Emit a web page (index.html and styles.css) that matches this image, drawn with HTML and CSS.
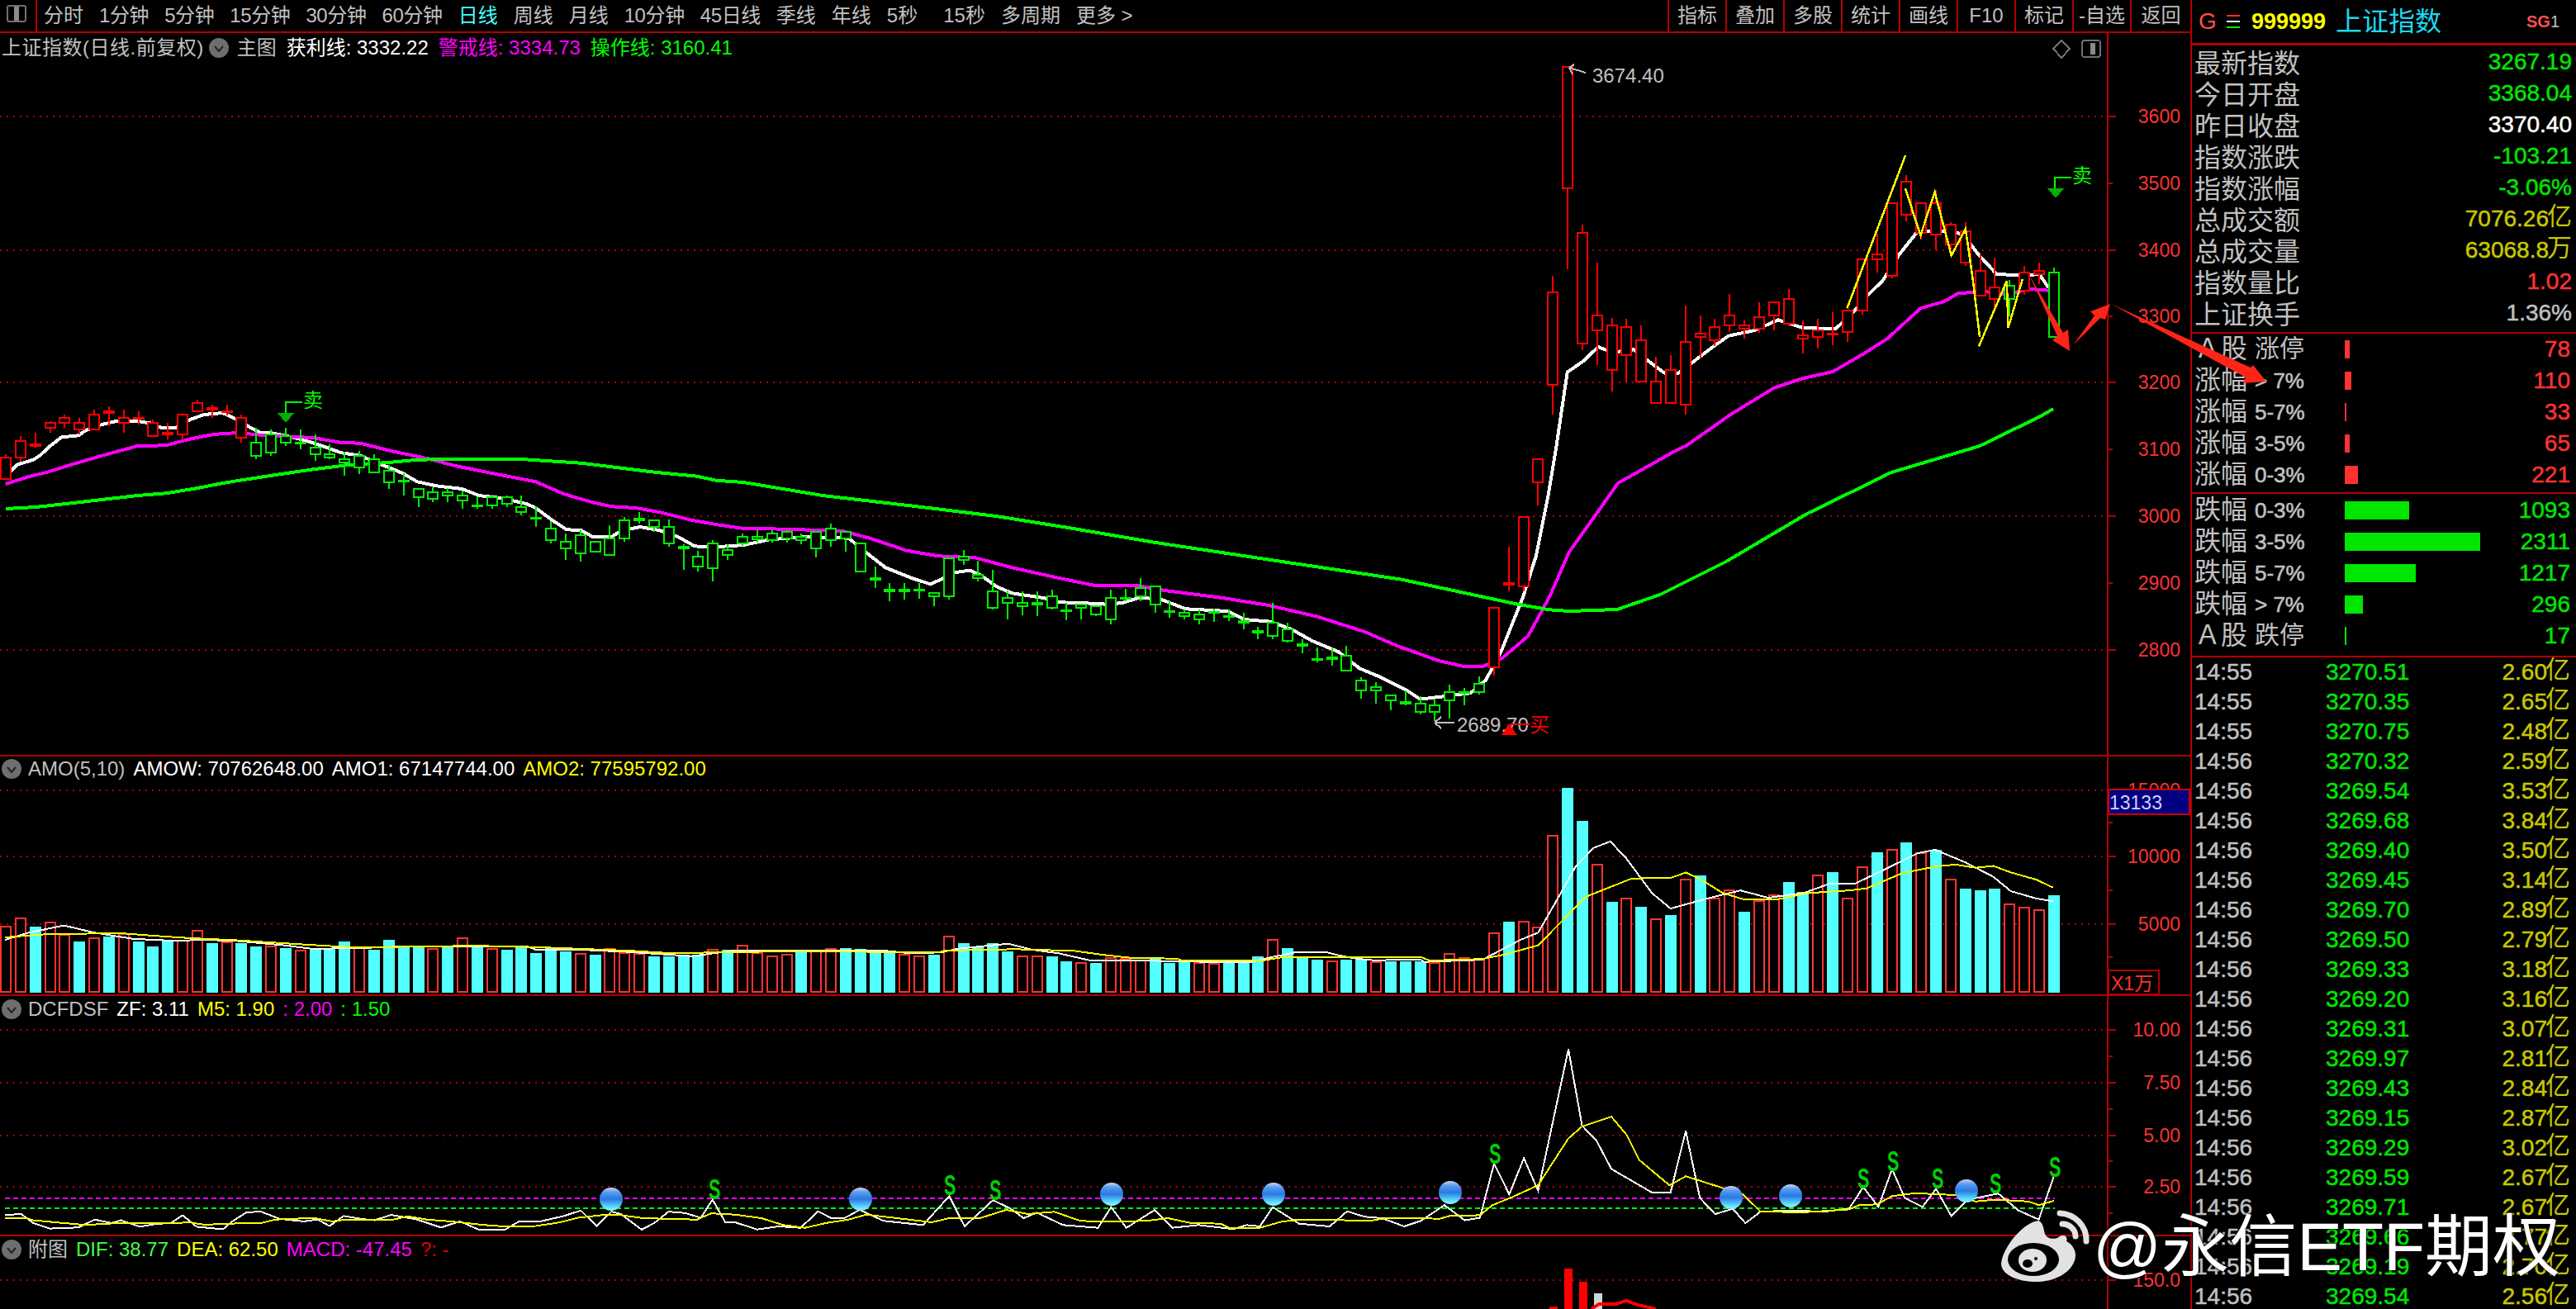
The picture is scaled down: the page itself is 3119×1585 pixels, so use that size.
FILE: index.html
```html
<!DOCTYPE html>
<html lang="zh-CN">
<head>
<meta charset="utf-8">
<title>上证指数 999999</title>
<link rel="stylesheet" href="styles.css">
</head>
<body>
<div class="app">
  <main class="main">
    <nav class="toolbar">
      <div class="tb-icon"><i class="win"></i></div>
      <div class="periods">
        <span>分时</span><span class="d">1分钟</span><span class="d">5分钟</span><span class="d">15分钟</span><span class="d">30分钟</span><span class="d">60分钟</span><span class="on">日线</span><span>周线</span><span>月线</span><span class="d">10分钟</span><span class="d">45日线</span><span>季线</span><span>年线</span><span>5秒</span><span class="wide">15秒</span><span>多周期</span><span>更多 &gt;</span>
      </div>
      <div class="tools">
        <span>指标</span><span>叠加</span><span>多股</span><span>统计</span><span>画线</span><span>F10</span><span>标记</span><span>-自选</span><span class="last">返回</span>
      </div>
    </nav>

    <section class="pane pane-main">
      <svg id="chart-main" class="plot" viewBox="0 40 2652 874" width="2652" height="874"></svg>
      <div class="head head-main">
        <span class="grey title-sp">上证指数(日线.前复权)</span>
        <svg class="chev" viewBox="0 0 24 24"><ellipse cx="12" cy="12" rx="12" ry="12" fill="#6e6e6e"/><path d="M7 10l5 6 5-6" fill="none" stroke="#222" stroke-width="2"/></svg>
        <span class="grey">主图</span>
        <span class="white">获利线: 3332.22</span>
        <span class="magenta">警戒线: 3334.73</span>
        <span class="green">操作线: 3160.41</span>
      </div>
    </section>

    <section class="pane pane-amo">
      <svg id="chart-amo" class="plot" viewBox="0 916 2652 288" width="2652" height="288"></svg>
      <div class="head head-sub">
        <svg class="chev" viewBox="0 0 24 24"><ellipse cx="12" cy="12" rx="12" ry="12" fill="#6e6e6e"/><path d="M7 10l5 6 5-6" fill="none" stroke="#222" stroke-width="2"/></svg>
        <span class="grey">AMO(5,10)</span>
        <span class="white">AMOW: 70762648.00</span>
        <span class="white">AMO1: 67147744.00</span>
        <span class="yellow">AMO2: 77595792.00</span>
      </div>
    </section>

    <section class="pane pane-dcf">
      <svg id="chart-dcf" class="plot" viewBox="0 1206 2652 289" width="2652" height="289"></svg>
      <div class="head head-sub">
        <svg class="chev" viewBox="0 0 24 24"><ellipse cx="12" cy="12" rx="12" ry="12" fill="#6e6e6e"/><path d="M7 10l5 6 5-6" fill="none" stroke="#222" stroke-width="2"/></svg>
        <span class="grey">DCFDSF</span>
        <span class="white">ZF: 3.11</span>
        <span class="yellow">M5: 1.90</span>
        <span class="magenta">: 2.00</span>
        <span class="green">: 1.50</span>
      </div>
    </section>

    <section class="pane pane-macd">
      <svg id="chart-macd" class="plot" viewBox="0 1497 2652 88" width="2652" height="88"></svg>
      <div class="head head-sub">
        <svg class="chev" viewBox="0 0 24 24"><ellipse cx="12" cy="12" rx="12" ry="12" fill="#6e6e6e"/><path d="M7 10l5 6 5-6" fill="none" stroke="#222" stroke-width="2"/></svg>
        <span class="grey">附图</span>
        <span class="lime">DIF: 38.77</span>
        <span class="yellow">DEA: 62.50</span>
        <span class="magenta">MACD: -47.45</span>
        <span class="red">?: -</span>
      </div>
    </section>
  </main>

  <aside class="side">
    <header class="side-title">
      <span class="g">G</span>
      <span class="menu"><i class="m-r"></i><i class="m-w"></i><i class="m-g"></i></span>
      <span class="code">999999</span>
      <span class="name">上证指数</span>
      <span class="sg">SG<b>1</b></span>
    </header>

    <div class="quote">
      <div class="q-row"><span>最新指数</span><b class="v-green">3267.19</b></div>
      <div class="q-row"><span>今日开盘</span><b class="v-green">3368.04</b></div>
      <div class="q-row"><span>昨日收盘</span><b class="v-white">3370.40</b></div>
      <div class="q-row"><span>指数涨跌</span><b class="v-green">-103.21</b></div>
      <div class="q-row"><span>指数涨幅</span><b class="v-green">-3.06%</b></div>
      <div class="q-row"><span>总成交额</span><b class="v-olive">7076.26<em>亿</em></b></div>
      <div class="q-row"><span>总成交量</span><b class="v-olive">63068.8<em>万</em></b></div>
      <div class="q-row"><span>指数量比</span><b class="v-red">1.02</b></div>
      <div class="q-row"><span>上证换手</span><b class="v-grey">1.36%</b></div>
    </div>

    <div class="breadth">
      <div class="b-row"><span class="b-a">Ａ股</span><span class="b-cj">涨停</span><i class="bar bar-r w78"></i><b class="v-red">78</b></div>
      <div class="b-row"><span class="b-a">涨幅</span><span class="b-n">&gt; 7%</span><i class="bar bar-r w110"></i><b class="v-red">110</b></div>
      <div class="b-row"><span class="b-a">涨幅</span><span class="b-n">5-7%</span><i class="bar bar-r w33"></i><b class="v-red">33</b></div>
      <div class="b-row"><span class="b-a">涨幅</span><span class="b-n">3-5%</span><i class="bar bar-r w65"></i><b class="v-red">65</b></div>
      <div class="b-row"><span class="b-a">涨幅</span><span class="b-n">0-3%</span><i class="bar bar-r w221"></i><b class="v-red">221</b></div>
    </div>

    <div class="breadth breadth-down">
      <div class="b-row"><span class="b-a">跌幅</span><span class="b-n">0-3%</span><i class="bar bar-g w1093"></i><b class="v-green">1093</b></div>
      <div class="b-row"><span class="b-a">跌幅</span><span class="b-n">3-5%</span><i class="bar bar-g w2311"></i><b class="v-green">2311</b></div>
      <div class="b-row"><span class="b-a">跌幅</span><span class="b-n">5-7%</span><i class="bar bar-g w1217"></i><b class="v-green">1217</b></div>
      <div class="b-row"><span class="b-a">跌幅</span><span class="b-n">&gt; 7%</span><i class="bar bar-g w296"></i><b class="v-green">296</b></div>
      <div class="b-row"><span class="b-a">Ａ股</span><span class="b-cj">跌停</span><i class="bar bar-g w17"></i><b class="v-green">17</b></div>
    </div>

    <div class="tape">
      <div class="t-row"><span>14:55</span><b>3270.51</b><u>2.60<em>亿</em></u></div>
      <div class="t-row"><span>14:55</span><b>3270.35</b><u>2.65<em>亿</em></u></div>
      <div class="t-row"><span>14:55</span><b>3270.75</b><u>2.48<em>亿</em></u></div>
      <div class="t-row"><span>14:56</span><b>3270.32</b><u>2.59<em>亿</em></u></div>
      <div class="t-row"><span>14:56</span><b>3269.54</b><u>3.53<em>亿</em></u></div>
      <div class="t-row"><span>14:56</span><b>3269.68</b><u>3.84<em>亿</em></u></div>
      <div class="t-row"><span>14:56</span><b>3269.40</b><u>3.50<em>亿</em></u></div>
      <div class="t-row"><span>14:56</span><b>3269.45</b><u>3.14<em>亿</em></u></div>
      <div class="t-row"><span>14:56</span><b>3269.70</b><u>2.89<em>亿</em></u></div>
      <div class="t-row"><span>14:56</span><b>3269.50</b><u>2.79<em>亿</em></u></div>
      <div class="t-row"><span>14:56</span><b>3269.33</b><u>3.18<em>亿</em></u></div>
      <div class="t-row"><span>14:56</span><b>3269.20</b><u>3.16<em>亿</em></u></div>
      <div class="t-row"><span>14:56</span><b>3269.31</b><u>3.07<em>亿</em></u></div>
      <div class="t-row"><span>14:56</span><b>3269.97</b><u>2.81<em>亿</em></u></div>
      <div class="t-row"><span>14:56</span><b>3269.43</b><u>2.84<em>亿</em></u></div>
      <div class="t-row"><span>14:56</span><b>3269.15</b><u>2.87<em>亿</em></u></div>
      <div class="t-row"><span>14:56</span><b>3269.29</b><u>3.02<em>亿</em></u></div>
      <div class="t-row"><span>14:56</span><b>3269.59</b><u>2.67<em>亿</em></u></div>
      <div class="t-row"><span>14:56</span><b>3269.71</b><u>2.67<em>亿</em></u></div>
      <div class="t-row"><span>14:56</span><b>3269.66</b><u>2.77<em>亿</em></u></div>
      <div class="t-row"><span>14:56</span><b>3269.19</b><u>2.70<em>亿</em></u></div>
      <div class="t-row"><span>14:56</span><b>3269.54</b><u>2.56<em>亿</em></u></div>
    </div>
  </aside>
</div>

<svg class="overlay" viewBox="0 0 3119 1585" width="3119" height="1585">
  <g class="arrows">
    <polygon points="2457,333 2498,403 2504,399 2506,425 2485,412 2491,407"/>
    <polygon points="2510,418 2536,382 2531,377 2555,368 2549,387 2543,385"/>
    <polygon points="2556,368 2725,445 2728,442 2744,462 2716,464 2719,457"/>
  </g>
  <g class="weibo">
    <path class="wb-body" d="M2468 1478C2450 1480 2425 1510 2423 1530C2423 1546 2450 1553 2468 1552C2495 1551 2513 1535 2513 1520C2513 1512 2508 1506 2502 1503C2504 1498 2500 1494 2494 1497C2488 1502 2478 1500 2476 1494C2474 1488 2474 1480 2468 1478Z"/>
    <ellipse class="wb-ring" cx="2462" cy="1525" rx="31" ry="20"/>
    <ellipse class="wb-in" cx="2461" cy="1526" rx="17" ry="14"/>
    <ellipse class="wb-eye" cx="2455" cy="1530" rx="6" ry="5"/>
    <circle class="wb-eye" cx="2465" cy="1524" r="2"/>
    <path class="wb-wave" d="M2494 1469C2512 1470 2527 1484 2526 1503"/>
    <path class="wb-wave" d="M2497 1482C2506 1482 2513 1489 2513 1497"/>
  </g>
</svg>
<div class="watermark">@永信ETF期权</div>

<script src="chart.js"></script>
</body>
</html>
```

FILE: styles.css
```css
* { box-sizing: border-box; }
html, body { margin: 0; padding: 0; background: #000; overflow: hidden; }
body {
  width: 3119px;
  height: 1585px;
  position: relative;
  color: #c0c0c0;
  font-family: "Liberation Sans", "Noto Sans CJK SC", sans-serif;
}
.app { display: flex; width: 3119px; height: 1585px; }
.main { width: 2652px; flex: none; display: flex; flex-direction: column; }

/* toolbar */
.toolbar {
  height: 40px;
  flex: none;
  display: flex;
  border-bottom: 2px solid #b00000;
  font-size: 24px;
  line-height: 38px;
  white-space: nowrap;
}
.tb-icon { width: 45px; flex: none; border-right: 2px solid #b00000; padding: 6px 0 0 8px; }
.win { display: block; width: 24px; height: 21px; border: 2px solid #707070; border-radius: 3px; background: linear-gradient(90deg, #000 0 7px, #8a8a8a 7px 13px, #000 13px); }
.periods { display: flex; gap: 19px; padding-left: 8px; }
.periods .on { color: #4ff; }
.periods .d { letter-spacing: -.4px; }
.periods .wide { margin-left: 12px; }
.tools { margin-left: auto; display: flex; }
.tools span { width: 70px; text-align: center; border-left: 2px solid #b00000; }
.tools .last { width: 73px; }

/* chart panes */
.pane { position: relative; flex: none; border-bottom: 2px solid #b00000; }
.pane-main { height: 876px; }
.pane-amo { height: 290px; }
.pane-dcf { height: 291px; }
.pane-macd { height: 88px; border-bottom: 0; }
.plot { display: block; }
.head {
  position: absolute;
  left: 2px;
  display: flex;
  align-items: center;
  gap: 12px;
  height: 24px;
  font-size: 24px;
  line-height: 24px;
  white-space: nowrap;
}
.head-main { top: 6px; }
.head-sub { top: 3px; left: 2px; gap: 10px; }
.pane-dcf .head, .pane-macd .head { top: 4px; }
.title-sp { letter-spacing: .5px; margin-right: -6px; }
.chev { width: 24px; height: 24px; flex: none; margin-right: -2px; }
.grey { color: #c0c0c0; }
.white { color: #fff; }
.magenta { color: #f0f; }
.green { color: #0f0; }
.lime { color: #4f4; }
.yellow { color: #ff0; }
.red { color: #e00000; }

/* svg chart parts */
.grid { stroke: #b00000; stroke-width: 2; stroke-dasharray: 2 6; fill: none; }
.axis { stroke: #b00000; stroke-width: 2; fill: none; }
.lbl { fill: #ff3232; font-size: 23px; text-anchor: end; }
.ma { fill: none; stroke-linejoin: round; }
.ma-w { stroke: #fff; stroke-width: 4; }
.ma-m { stroke: #f0f; stroke-width: 4; }
.ma-g { stroke: #0f0; stroke-width: 4; }
.zig { fill: none; stroke: #ff0; stroke-width: 2.5; }
.cu { stroke: #f00; stroke-width: 2; fill: #000; }
.cd { stroke: #0e0; stroke-width: 2; fill: #000; }
.vr { stroke: #ff3232; stroke-width: 2; fill: #000; }
.vc { fill: #54ffff; }
.thin-w { fill: none; stroke: #fff; stroke-width: 2; }
.thin-y { fill: none; stroke: #ff0; stroke-width: 2; }
.dash-m { stroke: #f0f; stroke-width: 2; stroke-dasharray: 6 4; }
.dash-g { stroke: #0f0; stroke-width: 2; stroke-dasharray: 6 4; }
.note { fill: #c0c0c0; font-size: 24px; }
.tag-s { fill: #00d000; font-size: 36px; font-weight: 700; }
.tag-sell { fill: #0f0; font-size: 24px; }
.tag-buy { fill: #f00; font-size: 24px; }
.ln-g { stroke: #0f0; stroke-width: 2; fill: none; }
.ln-r { stroke: #f00; stroke-width: 2; fill: none; }
.ln-n { stroke: #c0c0c0; stroke-width: 2; fill: none; }
.tri-g { fill: #00b000; }
.tri-r { fill: #f00; }
.win-s { fill: #000; stroke: #707070; stroke-width: 2; }
.win-b { fill: #8a8a8a; }
.dia { fill: none; stroke: #707070; stroke-width: 2; }
.box-blue { fill: #000080; stroke: #d00000; stroke-width: 2; }
.box-none { fill: #000; stroke: #b00000; stroke-width: 2; }
.box-txt { fill: #d0d0ff; font-size: 23px; }
.box-x { fill: #ff3232; font-size: 23px; }
.mb-r { fill: #f00; }
.mb-g { fill: #c8d8d8; }
.ln-mr { stroke: #f00; stroke-width: 4; fill: none; }

/* side panel */
.side { width: 467px; flex: none; border-left: 2px solid #b00000; display: flex; flex-direction: column; }
.side-title { height: 55px; flex: none; display: flex; align-items: center; border-bottom: 3px solid #b00000; padding-left: 8px; position: relative; }
.g { color: #ff5050; font-size: 28px; width: 34px; }
.menu { width: 30px; display: flex; flex-direction: column; gap: 5px; }
.menu i { display: block; width: 16px; height: 2px; }
.m-r { background: #ff3030; }
.m-w { background: #fff; }
.m-g { background: #0e0; }
.code { color: #ff0; font-size: 27px; font-weight: 700; width: 102px; }
.name { color: #1cd8f0; font-size: 32px; line-height: 38px; }
.sg { margin-left: auto; margin-right: 20px; color: #ff5050; font-size: 20px; font-weight: 700; }
.sg b { color: #c0c0c0; font-weight: 400; }

.quote { flex: none; height: 349px; padding-top: 3px; border-bottom: 2px solid #b00000; }
.q-row { display: flex; justify-content: space-between; align-items: center; height: 38px; padding: 0 5px 0 3px; font-size: 32px; line-height: 38px; white-space: nowrap; }
.q-row b, .b-row b, .t-row b, .t-row u, .t-row span { -webkit-text-stroke: .5px currentColor; }
.q-row b, .b-row b { font-size: 28px; font-weight: 400; line-height: 38px; }
.q-row b { display: flex; align-items: center; margin-top: -4px; }
.q-row em, .t-row em { font-style: normal; font-size: 30px; line-height: 30px; margin: -6px 0 0 -2px; -webkit-text-stroke: 0; }
.v-green { color: #00e600; }
.v-white { color: #fff; }
.v-olive { color: #c8c800; }
.v-red { color: #ff3232; }
.v-grey { color: #c0c0c0; }

.breadth { flex: none; height: 194px; padding: 0 7px 0 3px; border-bottom: 2px solid #b00000; }
.breadth-down { height: 198px; padding-top: 1px; }
.b-row { display: flex; align-items: center; height: 38px; white-space: nowrap; }
.b-a { width: 73px; flex: none; font-size: 32px; line-height: 32px; margin-top: -3px; }
.b-cj { width: 109px; flex: none; font-size: 30px; line-height: 32px; margin-top: -3px; }
.b-n { width: 109px; flex: none; font-size: 26px; -webkit-text-stroke: .6px currentColor; }
.bar { display: block; height: 22px; flex: none; }
.bar-r { background: #ff3232; }
.bar-g { background: #00e600; }
.b-row b { margin-left: auto; }
.w78 { width: 6px; } .w110 { width: 8px; } .w33 { width: 2px; } .w65 { width: 6px; } .w221 { width: 16px; }
.w1093 { width: 78px; } .w2311 { width: 164px; } .w1217 { width: 86px; } .w296 { width: 22px; } .w17 { width: 2px; }

.tape { flex: 1; padding: 0 7px 0 3px; overflow: hidden; }
.t-row { display: flex; align-items: center; height: 36px; font-size: 28px; line-height: 32px; white-space: nowrap; }
.t-row span { width: 159px; flex: none; color: #c0c0c0; }
.t-row b { font-weight: 400; color: #00e600; }
.t-row u { display: flex; align-items: center; margin-left: auto; text-decoration: none; color: #c8c800; }

/* overlays */
.overlay { position: absolute; left: 0; top: 0; pointer-events: none; }
.arrows polygon { fill: #ff2418; }
.wb-body { fill: #e2e2e2; }
.wb-ring, .wb-eye { fill: #000; }
.wb-in { fill: #e2e2e2; }
.wb-wave { fill: none; stroke: #e2e2e2; stroke-width: 7; stroke-linecap: round; }
.watermark {
  position: absolute;
  left: 2534px;
  top: 1460px;
  font-size: 82px;
  line-height: 100px;
  color: #fff;
  white-space: nowrap;
  text-shadow: 0 0 3px #000, 0 0 3px #000;
}
```

FILE: chart.js
```javascript
// Daily K-line data, read per bar in page pixels, rendered into the four chart panes.
const X = n => Math.round(7 + 17.84 * n);
const y3 = (base, a) => a.map(v => base + v / 3);

// [bodyTop, bodyBottom, wickTop, wickBottom]
const c0 = [[338,424,330,424],[278,346,265,358],[290,304,252,305],[212,238,210,252],[194,220,186,234],[212,244,198,258],[182,244,168,244],[170,184,156,228],[194,220,168,252],[194,204,174,222],[212,268,204,268],[248,262,216,276],[182,262,182,278],[140,178,132,178],[158,172,150,198],[170,178,150,188],[194,274,186,288],[284,340,234,348],[254,328,240,336],[260,292,234,300],[284,292,240,312],[302,334,258,354],[326,346,294,348],[344,364,320,408],[332,382,318,402],[344,400,330,400],[386,436,370,456],[422,430,400,480],[452,490,452,522],[464,496,450,504],[464,484,452,504],[476,502,462,528],[512,520,484,528],[482,520,476,528],[482,514,480,522],[518,544,480,552],[558,562,520,594],[596,646,574,654],[644,676,618,714],[620,694,606,720],[644,688,644,688],[632,700,588,700],[566,640,558,648],[560,574,540,582],[566,598,566,612],[590,658,566,666],[662,676,656,750],[698,742,680,756],[650,748,642,792],[674,700,656,714],[626,656,618,664]];
const c1 = [[146,162,126,170],[134,166,126,172],[128,160,126,172],[148,164,138,178],[128,196,128,226],[116,166,102,186],[128,160,128,204],[170,280,170,280],[296,310,258,336],[338,352,318,384],[338,352,318,378],[338,346,318,376],[350,370,350,402],[224,370,224,378],[218,238,198,252],[284,304,236,312],[344,412,270,414],[368,394,344,450],[386,406,348,436],[386,400,348,438],[362,412,342,414],[414,418,390,452],[392,412,392,450],[400,436,400,438],[368,454,342,468],[368,374,340,384],[332,370,300,384],[326,400,326,426],[416,424,384,444],[422,442,414,450],[428,452,414,468],[420,424,410,458],[434,442,414,456],[452,466,426,486],[488,500,478,522],[458,514,390,522],[482,532,462,534],[536,550,522,574],[590,598,552,606],[584,598,556,618],[578,640,546,640],[668,712,660,738],[692,712,678,756],[722,748,722,780],[746,760,708,762],[752,790,730,796],[758,790,738,820],[710,748,686,810],[710,720,698,762],[680,718,656,724],[404,628,404,654]];
const c2 = [[938,1282,882,1386],[120,568,120,858],[722,1132,696,1152],[1022,1084,834,1206],[1058,1228,1034,1302],[1064,1174,1038,1270],[1112,1270,1062,1270],[1262,1348,1176,1348],[1220,1348,1170,1348],[1118,1354,990,1386],[1088,1108,1026,1180],[1064,1120,1038,1136],[1022,1066,948,1086],[1058,1078,1044,1110],[1028,1078,978,1090],[974,1030,974,1080],[962,1060,930,1066],[1094,1112,1044,1164],[1076,1106,1038,1146],[1088,1096,1014,1134],[1004,1090,1004,1122],[818,1012,818,1024],[800,826,730,870],[614,886,614,892],[536,664,516,684],[614,730,614,750],[614,736,570,790],[692,772,686,790],[716,838,686,846],[860,958,804,958],[920,970,816,1000],[914,968,896,1030],[866,938,846,952],[860,878,834,912],[866,1108,852,1108]];

const candles = [
  ...c0.map(r => y3(440, r)),
  ...c1.map(r => y3(600, r)),
  [704.7, 709, 662, 716], [624.7, 711, 624.7, 716], [554.7, 585, 554.7, 611.7],
  ...c2.map(r => y3(40, r))
];
const isUp = n => (n <= 16) || (n >= 101 && n !== 136 && n !== 139);

// Amount bars: [topY, 'r' hollow red | 'c' filled cyan]
const t5 = v => 900 + v / 2.289;
const t10 = v => 1090 + v / 3;
const vol = [];
'505r 482r 508c 495r 528r 549c 537r 536c 527r 549c 563c 547c 545r 518r 554c 550r 554c 563c 560r 568c 573r 570c 568c 549c 565r 572c 545c 560c 566c 568r 560c 537r 560c 568r 572c 560c 581c 566c 577c 582r 586c 568r 578r 582r 591c 591c 585c 587c 569r 572c'
  .split(' ').forEach(s => vol.push([t5(parseInt(s)), s.slice(-1)]));
'163r 188r 200r 194r 185c 181r 175r 175c 178c 182c 186c 195r 200r 198c 128r 156c 170c 156c 186c 200r 200r 204c 222c 224r 228c 206r 210r 216r 214c 228c 222c 224r 228r 228c 228c 204c 140r 175c 208c 216c 218r 216c 216c 222r 222c'
  .split(' ').forEach(s => vol.push([t10(parseInt(s)), s.slice(-1)]));
'605c 605c 606r 582r 592r 597r 523r 494c 491r 509r 253r 124c 215c 335r 439c 427r 453c 486r 476c 376r 366c 428r 405r 467c 435r 419r 385c 412c 363r 357c 427r 340r 302c 294r 275c 303r 296c 376r 403c 407c 403c 445r 454r 459r 421c'
  .split(' ').forEach(s => vol.push([t5(parseInt(s)), s.slice(-1)]));

const pts = (bx, kx, by, ky, a) => {
  const out = [];
  for (let i = 0; i < a.length; i += 2) out.push((bx + a[i] / kx).toFixed(1) + ',' + (by + a[i + 1] / ky).toFixed(1));
  return out;
};
const k87 = 1.742, k9 = 1.568, k6 = 1.633, k10 = 1.889, kv = 2.289;

const maW = [
  ...pts(0,k87,440,3,[22,392,36,368,70,350,84,335,106,300,130,268,166,262,180,244,215,222,245,210,290,210,320,218,340,234,370,234,400,205,430,186,470,180,495,200,525,230,550,252,570,252,600,262,640,278,680,300,720,325,760,335,800,365,830,385,850,400,880,430,920,445,975,456,1010,480,1060,490,1110,510,1130,525,1165,570,1195,604,1225,606,1250,630,1290,630,1310,608,1350,594,1390,606,1430,630,1465,664,1500,668]),
  ...pts(900,k9,600,3,[0,180,50,160,120,150,200,155,235,210,270,262,320,300,355,322,375,305,400,280,430,272,450,288,480,330,510,355,570,372,600,388,640,390,690,395,720,390,750,372,790,375,840,412,920,420,950,450,1000,458,1040,485,1080,528,1130,568,1170,628,1210,660,1260,708,1285,740,1380,718,1410,670,1440,560,1480,370,1505,220,1528,0]),
  ...pts(1780,k87,40,3,[182,1500,195,1350,205,1232,240,1190,270,1140,300,1160,345,1150,375,1190,410,1235,440,1235,470,1195,520,1130,545,1100,600,1080,650,1042,700,1070,770,1075,800,1030,840,950,870,900,905,805,945,718,1000,720,1040,730,1070,800,1110,875,1170,882,1200,875,1220,925])
];
const maM = [
  ...pts(0,k87,440,3,[12,438,60,412,100,395,150,368,215,335,290,300,350,298,400,275,450,258,500,252,560,262,660,270,720,288,760,290,830,320,900,345,960,372,1040,400,1130,430,1190,475,1250,505,1290,520,1340,525,1390,540,1460,570,1510,585]),
  ...pts(900,k9,600,3,[0,120,85,122,190,130,240,155,310,200,370,220,440,226,510,262,590,296,670,328,750,328,800,345,910,372,1000,400,1090,440,1180,495,1240,545,1320,600,1370,622,1405,620,1440,592,1490,510,1530,370,1568,205]),
  '1913,650', '1938,615', '1959,585', '2000,562', '2030,545',
  ...pts(1780,k87,40,3,[455,1500,550,1385,640,1290,700,1255,765,1230,830,1165,880,1110,950,1000,1000,975,1030,945,1090,940,1130,950,1180,930,1220,935])
];
const maG = [
  ...pts(0,k87,440,3,[12,528,75,522,150,508,290,480,350,472,410,455,480,432,570,408,660,385,740,368,820,360,870,352,920,348,1100,348,1160,355,1225,362,1300,378,1380,395,1470,410,1510,425,1568,432]),
  ...pts(900,k9,600,3,[150,0,330,40,480,75,620,118,780,170,960,222,1120,268,1250,305,1360,350,1470,395,1530,415,1568,420]),
  '1900,740', '1958,738', '2010,720', '2090,680', '2188,622', '2290,572', '2397,540',
  ...pts(1780,k87,40,3,[1140,1445,1200,1395,1230,1365])
];
const zig = [
  pts(1780,k87,40,3,[795,1000,918,445]),
  pts(1780,k87,40,3,[918,565,950,735,980,578,1015,808,1045,712,1060,890,1075,1105]),
  pts(1780,k87,40,3,[1073,1138,1132,900,1135,1070,1165,895])
];

const amoY = [
  ...pts(0,k87,900,kv,[10,538,90,530,250,526,340,535,400,540,500,546,620,556,750,566,1000,561,1130,565,1330,575,1420,582]),
  ...pts(890,k10,1090,3,[0,188,200,186,340,188,470,188,480,183,640,178,775,184,850,200,910,210,1010,212,1020,218,1210,218,1250,208,1568,206]),
  ...pts(1700,k6,900,kv,[50,602,155,598,200,585,265,560,300,510,360,425,450,375,530,372,557,358,590,380,630,415,670,432,740,432,800,415,880,408,915,402,985,360,1050,342,1090,336,1130,345,1165,340,1200,358,1250,378,1283,400])
];
const amoW = [
  ...pts(0,k87,900,kv,[10,545,60,525,135,505,200,525,280,542,380,548,420,544,500,548,600,560,660,570,800,566,860,562,950,562,1110,562,1130,572,1220,572,1320,578,1460,590]),
  ...pts(890,k10,1090,3,[0,182,170,183,340,183,400,193,470,190,510,176,580,165,625,158,680,180,740,193,810,218,950,220,1080,224,1180,224,1230,206,1280,190,1350,188,1380,200,1420,212,1460,218,1568,216]),
  ...pts(1700,k6,900,kv,[40,606,155,600,230,545,265,525,300,440,340,340,375,290,408,272,440,320,490,415,527,458,600,430,665,408,720,428,790,415,840,390,890,390,950,350,1015,305,1050,295,1110,330,1165,370,1200,410,1250,430,1283,438])
];
const dcfW = [
  ...pts(0,k87,900,kv,[10,1307,45,1305,70,1330,105,1345,165,1342,200,1320,235,1330,255,1322,295,1340,330,1332,360,1330,385,1308,415,1340,470,1347,490,1325,520,1300,550,1298,590,1318,640,1325,670,1320,695,1338,725,1310,760,1318,790,1322,825,1307,880,1320,930,1342,970,1325,1010,1348,1065,1348,1095,1325,1140,1325,1190,1310,1225,1295,1258,1338,1290,1298,1310,1305,1353,1348,1380,1330,1410,1298,1445,1302,1478,1315,1503,1265,1530,1328]),
  ...pts(890,k10,1090,3,[0,1170,50,1196,100,1185,150,1190,190,1130,220,1155,250,1155,285,1125,340,1165,430,1180,490,1075,525,1185,590,1090,630,1120,660,1155,690,1135,750,1180,830,1190,860,1115,895,1190,960,1125,1000,1190,1060,1180,1140,1195,1170,1180,1200,1185,1230,1115,1290,1175,1360,1185,1400,1130,1440,1150,1480,1155,1530,1185,1568,1165]),
  ...pts(1700,k6,900,kv,[80,1280,120,1322,150,1315,178,1165,208,1250,237,1150,265,1240,325,848,352,1060,380,1100,410,1180,490,1245,527,1245,557,1075,585,1260,615,1305,650,1290,675,1330,705,1298,765,1295,830,1298,880,1290,908,1230,938,1285,965,1180,990,1260,1025,1285,1052,1235,1082,1310,1115,1265,1175,1248,1215,1295,1255,1320,1285,1200])
];
const dcfY = [
  ...pts(0,k87,900,kv,[10,1316,55,1316,70,1322,120,1328,180,1335,250,1330,360,1330,400,1328,430,1334,490,1332,500,1330,550,1330,580,1320,620,1318,660,1315,700,1325,730,1320,830,1320,860,1311,900,1320,950,1325,1020,1335,1070,1340,1130,1338,1180,1328,1220,1315,1280,1306,1310,1308,1350,1315,1400,1318,1470,1320,1500,1303]),
  ...pts(890,k10,1090,3,[0,1142,60,1155,110,1180,160,1190,210,1172,260,1160,300,1142,370,1155,450,1170,490,1155,560,1155,620,1125,670,1140,730,1132,790,1165,850,1168,940,1165,990,1155,1040,1172,1110,1175,1130,1190,1200,1190,1250,1168,1290,1160,1380,1162,1450,1165,1490,1155,1568,1155]),
  ...pts(1700,k6,900,kv,[70,1318,90,1310,150,1308,175,1280,210,1260,265,1225,325,1095,352,1062,410,1035,440,1085,465,1155,525,1225,557,1200,620,1228,670,1250,705,1298,790,1300,880,1292,900,1280,935,1278,965,1255,1010,1247,1090,1252,1130,1270,1170,1265,1235,1270,1255,1280,1285,1268])
];

const hl = (y, cls, x1 = 0, x2 = 2552) => `<line class="${cls}" x1="${x1}" x2="${x2}" y1="${y}" y2="${y}"/>`;
const vl = (x, y1, y2, cls = 'axis') => `<line class="${cls}" x1="${x}" x2="${x}" y1="${y1}" y2="${y2}"/>`;
const lbl = (y, t) => `<text class="lbl" x="2640" y="${y + 8}">${t}</text>`;
const poly = (a, cls) => `<polyline class="${cls}" points="${a.join(' ')}"/>`;

function axisPane(y1, y2, labels, shorts) {
  let s = vl(2552, y1, y2);
  labels.forEach(([y, t]) => {
    s += hl(y, 'grid') + hl(y, 'axis', 2552, 2562) + lbl(y, t);
  });
  shorts.forEach(y => { s += hl(y, 'axis', 2552, 2558); });
  return s;
}

// Main K-line pane
let m = '<g shape-rendering="crispEdges">';
m += axisPane(40, 914, [[141,'3600'],[303,'3400'],[463,'3200'],[625,'3000'],[787,'2800']], [222,383,544,706]);
m += lbl(222,'3500') + lbl(383,'3300') + lbl(544,'3100') + lbl(706,'2900');
m += poly(maW, 'ma ma-w') + poly(maM, 'ma ma-m') + poly(maG, 'ma ma-g');
candles.forEach((c, n) => {
  const x = X(n), cls = isUp(n) ? 'cu' : 'cd';
  m += `<line class="${cls}" x1="${x}" x2="${x}" y1="${c[2].toFixed(1)}" y2="${c[3].toFixed(1)}"/>`;
  const h = Math.max(c[1] - c[0] - 2, 1);
  m += `<rect class="${cls}" x="${x - 6}" y="${(c[0] + 1).toFixed(1)}" width="12" height="${h.toFixed(1)}"/>`;
});
zig.forEach(z => { m += poly(z, 'zig'); });
m += `<rect class="win-s" x="2521" y="49" width="22" height="20" rx="3"/><rect class="win-b" x="2531" y="52" width="6" height="14"/>`;
m += `<polygon class="dia" points="2496,49 2506,59 2496,70 2486,59"/>`;
// sell flags
m += `<path class="ln-g" d="M346 500V487H366"/><polygon class="tri-g" points="336,500 356,500 346,512"/><text class="tag-sell" x="367" y="493">卖</text>`;
m += `<path class="ln-g" d="M2488 228V215H2508"/><polygon class="tri-g" points="2479,228 2499,228 2489,240"/><text class="tag-sell" x="2509" y="221">卖</text>`;
// extreme notes
m += `<path class="ln-n" d="M1900 82L1920 88M1900 82L1906 78M1900 82L1904 90"/><text class="note" x="1928" y="100">3674.40</text>`;
m += `<path class="ln-n" d="M1737 875H1761M1737 875L1745 868M1737 875L1745 882"/><text class="note" x="1764" y="886">2689.70</text>`;
m += `<polygon class="tri-r" points="1827,876 1818,890 1837,890"/><path class="ln-r" d="M1828 877H1852"/><text class="tag-buy" x="1852" y="886">买</text>`;
m += '</g>';
document.getElementById('chart-main').innerHTML = m;

// AMO pane
let a = '<g shape-rendering="crispEdges">';
a += axisPane(916, 1204, [[957,'15000'],[1037,'10000'],[1119,'5000']], [996,1078,1159]);
vol.forEach((v, n) => {
  const x = X(n);
  if (v[1] === 'c') a += `<rect class="vc" x="${x - 7}" y="${v[0].toFixed(1)}" width="14" height="${(1202 - v[0]).toFixed(1)}"/>`;
  else a += `<rect class="vr" x="${x - 6}" y="${(v[0] + 1).toFixed(1)}" width="12" height="${(1200 - v[0]).toFixed(1)}"/>`;
});
a += poly(amoW, 'thin-w') + poly(amoY, 'thin-y');
a += `<rect class="box-blue" x="2553" y="956" width="98" height="30"/><text class="box-txt" x="2554" y="980">13133</text>`;
a += `<rect class="box-none" x="2553" y="1175" width="61" height="29"/><text class="box-x" x="2556" y="1199">X1万</text>`;
a += '</g>';
document.getElementById('chart-amo').innerHTML = a;

// DCFDSF pane
let d = '<defs><linearGradient id="ball" x1="0" y1="0" x2="0" y2="1"><stop offset="0" stop-color="#c8d8f0"/><stop offset=".2" stop-color="#5a9cf0"/><stop offset=".5" stop-color="#2a78e0"/><stop offset=".85" stop-color="#60e0ff"/><stop offset="1" stop-color="#a0f4ff"/></linearGradient></defs>';
d += '<g shape-rendering="crispEdges">';
d += axisPane(1206, 1495, [[1247,'10.00'],[1311,'7.50'],[1375,'5.00'],[1437,'2.50']], [1279,1343,1406,1469]);
d += hl(1451, 'dash-m', 6, 2488) + hl(1463, 'dash-g', 6, 2488);
d += poly(dcfW, 'thin-w') + poly(dcfY, 'thin-y');
d += '</g>';
[[740,1452],[1042,1452],[1346,1446],[1542,1446],[1756,1444],[2096,1450],[2168,1448],[2381,1442]].forEach(([x, y]) => {
  d += `<circle cx="${x}" cy="${y}" r="14" fill="url(#ball)"/>`;
});
[[865,1439],[1150,1434],[1205,1440],[1810,1396],[2256,1426],[2292,1405],[2346,1426],[2416,1432],[2488,1412]].forEach(([x, y]) => {
  d += `<text class="tag-s" transform="translate(${x - 7},${y + 13}) scale(.6,1)">S</text>`;
});
document.getElementById('chart-dcf').innerHTML = d;

// MACD pane
let c = '<g shape-rendering="crispEdges">';
c += axisPane(1497, 1585, [[1550,'150.0']], []);
c += `<rect class="mb-r" x="1876" y="1582" width="10" height="3"/><rect class="mb-r" x="1894" y="1536" width="10" height="49"/><rect class="mb-r" x="1912" y="1552" width="10" height="33"/><rect class="mb-g" x="1930" y="1566" width="10" height="19"/>`;
c += `<polyline class="ln-mr" points="1927,1585 1936,1579 1956,1579 1969,1575 1983,1580 2005,1585"/>`;
c += '</g>';
document.getElementById('chart-macd').innerHTML = c;
```
